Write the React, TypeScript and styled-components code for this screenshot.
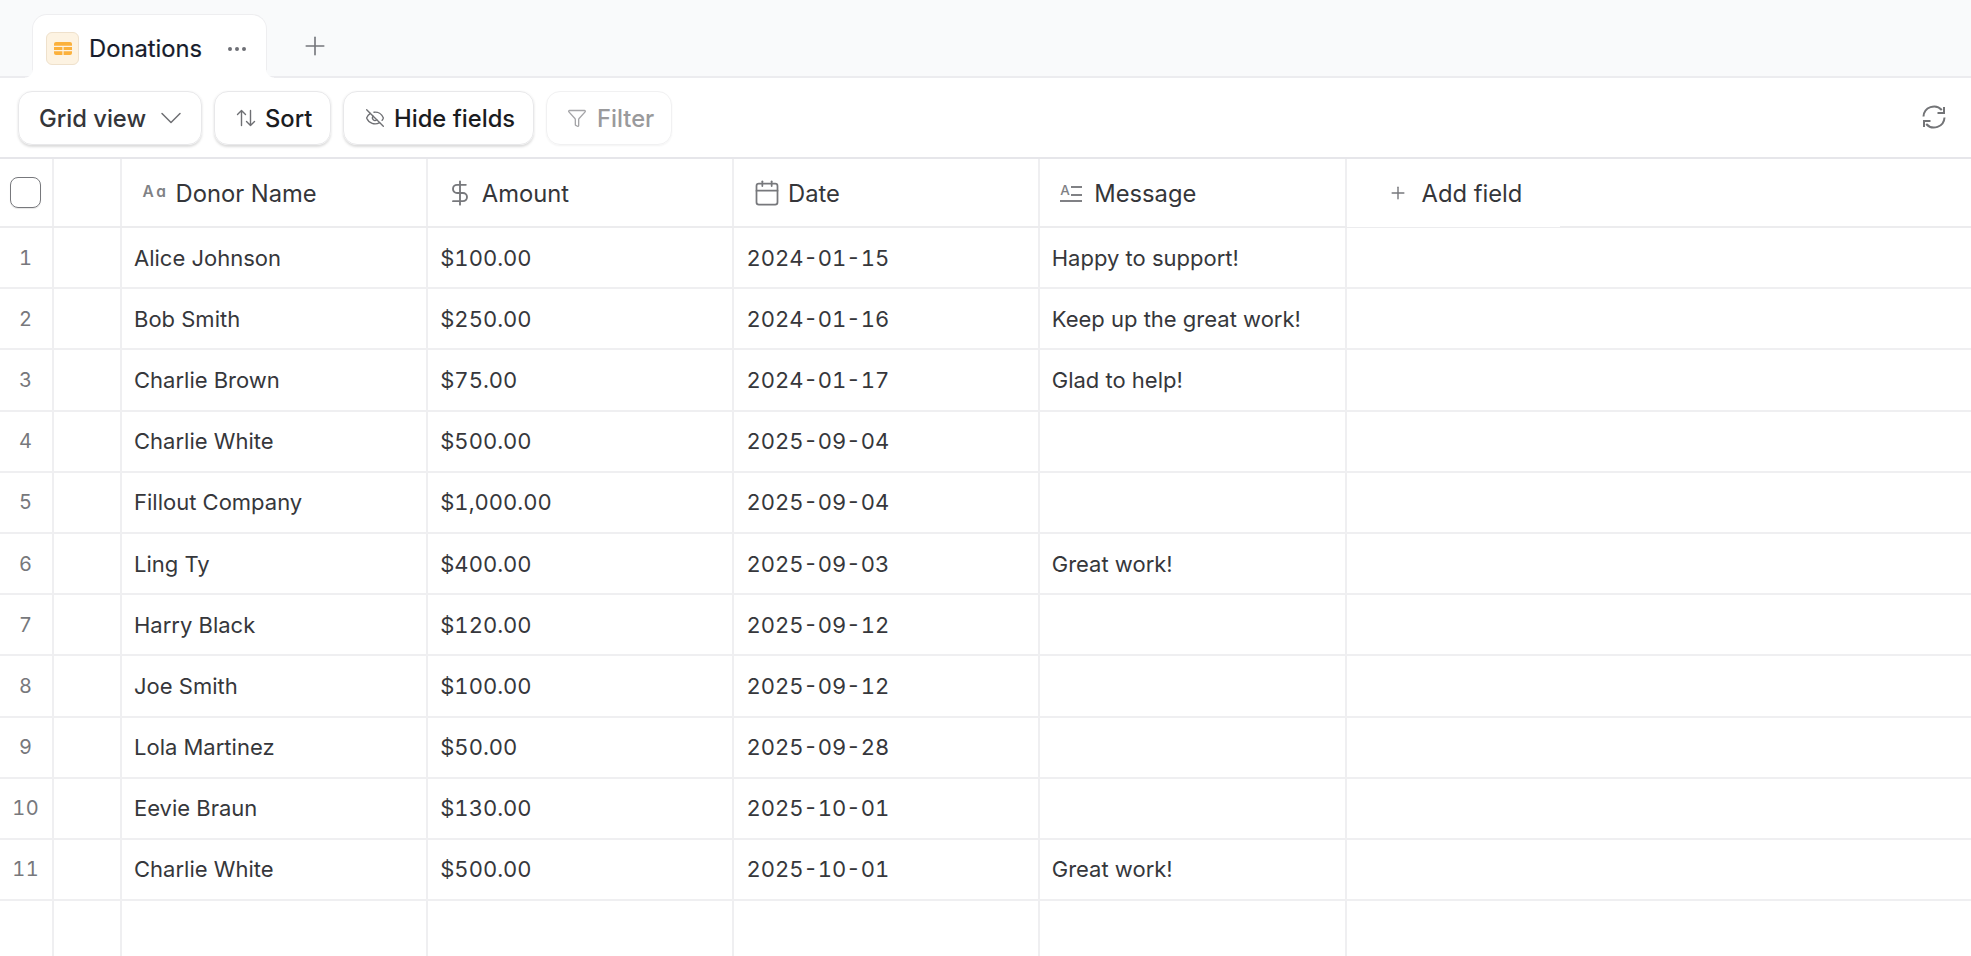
import React from "react";
import styled, { createGlobalStyle } from "styled-components";
import { ChevronDown, DollarSign, Ellipsis, EyeOff, Funnel, Plus, Calendar } from "lucide-react";

const Global = createGlobalStyle`
  html, body { margin: 0; padding: 0; height: 100%; background: #fff; overflow: hidden; }
  #root { height: 100%; }
  * { box-sizing: border-box; }
`;

const Page = styled.div`
  height: 956px;
  display: flex;
  flex-direction: column;
  font-family: Inter, "Liberation Sans", sans-serif;
  color: #2e2f33;
  background: #fff;
`;

const TabBar = styled.div`
  height: 78px;
  flex: none;
  padding: 14px 0 0 32px;
  display: flex;
  align-items: stretch;
  background: #f9fafb;
  border-bottom: 2px solid #ececef;
`;

const Tab = styled.div`
  position: relative;
  width: 235px;
  height: 64px;
  padding: 17px 0 0 13px;
  display: flex;
  align-items: flex-start;
  background: #fff;
  border: 1.5px solid #eeeef0;
  border-bottom: none;
  border-radius: 15px 15px 0 0;
  &::before, &::after {
    content: "";
    position: absolute;
    bottom: 0;
    width: 8px;
    height: 8px;
  }
  &::before { left: -8px; background: radial-gradient(circle at 0 0, transparent 7px, #fff 8px); }
  &::after { right: -8px; background: radial-gradient(circle at 100% 0, transparent 7px, #fff 8px); }
`;

const TabIcon = styled.div`
  width: 33px;
  height: 33px;
  flex: none;
  display: flex;
  align-items: center;
  justify-content: center;
  border-radius: 6px;
  background: #fdf3e2;
  border: 1.5px solid #efe1cc;
`;

const TabLabel = styled.span`
  margin-left: 10px;
  font-size: 23.75px;
  line-height: 33px;
  font-weight: 400;
  -webkit-text-stroke: 0.2px #171c2c;
  color: #171c2c;
  width: 125px;
  white-space: nowrap;
`;

const TabMenu = styled.span`
  margin-left: 11px;
  height: 33px;
  display: flex;
  align-items: center;
  color: #6d6f75;
`;

const AddTab = styled.div`
  margin-left: 33px;
  height: 64px;
  width: 30px;
  display: flex;
  align-items: center;
  color: #74767b;
`;

const Toolbar = styled.div`
  height: 81px;
  flex: none;
  padding: 13px 25px 0 18px;
  display: flex;
  align-items: flex-start;
  gap: 12px;
  border-bottom: 2px solid #e6e6ea;
`;

const ToolButton = styled.div<{ $w: number; $faded?: boolean; $pl: number; $gap: number }>`
  width: ${(p) => p.$w}px;
  height: 54px;
  flex: none;
  padding-left: ${(p) => p.$pl}px;
  display: flex;
  align-items: center;
  gap: ${(p) => p.$gap}px;
  border: 1.5px solid ${(p) => (p.$faded ? "#f1f1f2" : "#e8e8ea")};
  border-radius: 14px;
  box-shadow: ${(p) => (p.$faded ? "0 1px 2px rgba(0,0,0,.05)" : "0 1.5px 2.5px rgba(0,0,0,.14)")};
  font-size: 23.75px;
  font-weight: 500;
  white-space: nowrap;
  color: ${(p) => (p.$faded ? "#9a9a9c" : "#1b1c1f")};
  svg { flex: none; color: ${(p) => (p.$faded ? "#a5a5a8" : "#6e6f73")}; }
`;

const GridLabel = styled.span`
  color: #35363a;
`;

const Spacer = styled.div`
  flex: 1;
`;

const Refresh = styled.div`
  margin-top: 14px;
  color: #737477;
  display: flex;
`;

const Grid = styled.div`
  flex: 1;
  display: flex;
  flex-direction: column;
  min-height: 0;
`;

const Columns = "53.5px 68px repeat(4, 306.25px) 1fr";

const HeaderRow = styled.div`
  height: 69px;
  flex: none;
  display: grid;
  grid-template-columns: ${Columns};
  border-bottom: 2px solid #ececee;
`;

const Row = styled.div`
  height: 61.2px;
  flex: none;
  display: grid;
  grid-template-columns: ${Columns};
  border-bottom: 2px solid #efeff1;
`;

const Filler = styled.div`
  flex: 1;
  display: grid;
  grid-template-columns: ${Columns};
`;

const Cell = styled.div`
  border-right: 2px solid #efeff1;
  display: flex;
  align-items: center;
  min-width: 0;
`;

const LastCell = styled.div``;

const CheckCell = styled(Cell)`
  padding-left: 10px;
`;

const Checkbox = styled.div`
  width: 31px;
  height: 31px;
  border: 1.5px solid #77787c;
  border-radius: 8px;
  box-shadow: 0 1px 1px rgba(0,0,0,.1);
`;

const HeadCell = styled(Cell)<{ $pl: number; $gap: number }>`
  padding-left: ${(p) => p.$pl}px;
  padding-top: 1px;
  gap: ${(p) => p.$gap}px;
  font-size: 23.75px;
  color: #35363a;
  white-space: nowrap;
  svg { flex: none; color: #77787c; }
`;

const AddField = styled.div`
  width: 213px;
  margin-bottom: -1px;
  padding: 1px 0 0 41px;
  display: flex;
  align-items: center;
  gap: 14px;
  font-size: 23.75px;
  color: #35363a;
  border-bottom: 1px solid #fff;
  svg { color: #77787c; flex: none; }
`;

const AaGlyph = styled.span`
  width: 26px;
  font-size: 15.5px;
  font-weight: 600;
  letter-spacing: 2.5px;
  color: #808185;
  position: relative;
  top: -2px;
`;

const LineGlyph = styled.span`
  position: relative;
  width: 22px;
  height: 18px;
  display: block;
  font-size: 13.5px;
  line-height: 13px;
  font-weight: 500;
  color: #808185;
  &::before {
    content: "";
    position: absolute;
    left: 11px;
    top: 2px;
    width: 11px;
    height: 6px;
    border-top: 2px solid #808185;
    border-bottom: 2px solid #808185;
  }
  &::after {
    content: "";
    position: absolute;
    left: 0;
    right: 0;
    bottom: 0;
    border-top: 2.5px solid #808185;
  }
`;

const IndexCell = styled(Cell)`
  justify-content: center;
  font-size: 20px;
  color: #77787c;
  font-variant-numeric: tabular-nums;
  letter-spacing: 0.6px;
`;

const TextCell = styled(Cell)`
  padding-left: 12.5px;
  font-size: 22px;
  color: #36373b;
  white-space: nowrap;
`;

const MessageCell = styled(TextCell)`
  padding-left: 11.5px;
`;

const NumberCell = styled(TextCell)`
  font-variant-numeric: tabular-nums;
`;

const rows = [
  ["Alice Johnson", "$100.00", "2024-01-15", "Happy to support!"],
  ["Bob Smith", "$250.00", "2024-01-16", "Keep up the great work!"],
  ["Charlie Brown", "$75.00", "2024-01-17", "Glad to help!"],
  ["Charlie White", "$500.00", "2025-09-04", ""],
  ["Fillout Company", "$1,000.00", "2025-09-04", ""],
  ["Ling Ty", "$400.00", "2025-09-03", "Great work!"],
  ["Harry Black", "$120.00", "2025-09-12", ""],
  ["Joe Smith", "$100.00", "2025-09-12", ""],
  ["Lola Martinez", "$50.00", "2025-09-28", ""],
  ["Eevie Braun", "$130.00", "2025-10-01", ""],
  ["Charlie White", "$500.00", "2025-10-01", "Great work!"],
];

const TableIcon = () => (
  <svg width="18" height="13" viewBox="0 0 18 13">
    <rect x="0" y="0" width="18" height="13" rx="2" fill="#fbb13c" />
    <path d="M0 4.3h18M0 8.7h18M9 4.3v8.7" stroke="#fdf3e2" strokeWidth="1.2" />
  </svg>
);

const SortIcon = () => (
  <svg width="20" height="18" viewBox="0 0 20 18" fill="none" stroke="currentColor" strokeWidth="1.4" strokeLinecap="round" strokeLinejoin="round">
    <path d="M5.5 16.5V1.5M1.5 5.5l4-4 4 4" />
    <path d="M14.5 1.5v15M10.5 12.5l4 4 4-4" />
  </svg>
);

const RefreshIcon = () => (
  <svg width="24" height="24" viewBox="0 0 24 24" fill="none" stroke="currentColor" strokeWidth="2">
    <path d="M1.5 11.5A10.5 10.5 0 0 1 19.8 5" />
    <path d="M22.5 12.5A10.5 10.5 0 0 1 4.2 19" />
    <path d="M22 2v6h-6.5" strokeLinejoin="miter" />
    <path d="M2 22v-6h6.5" strokeLinejoin="miter" />
  </svg>
);

export default function App() {
  return (
    <Page>
      <Global />
      <TabBar>
        <Tab>
          <TabIcon><TableIcon /></TabIcon>
          <TabLabel>Donations</TabLabel>
          <TabMenu><Ellipsis size={24} strokeWidth={2} /></TabMenu>
        </Tab>
        <AddTab><Plus size={30} strokeWidth={1.3} /></AddTab>
      </TabBar>
      <Toolbar>
        <ToolButton $w={184} $pl={20} $gap={7}>
          <GridLabel>Grid view</GridLabel>
          <ChevronDown size={36} strokeWidth={1} />
        </ToolButton>
        <ToolButton $w={117} $pl={21} $gap={9}>
          <SortIcon />
          <span>Sort</span>
        </ToolButton>
        <ToolButton $w={191} $pl={21} $gap={9}>
          <EyeOff size={20} strokeWidth={1.6} />
          <span>Hide fields</span>
        </ToolButton>
        <ToolButton $w={126} $pl={20} $gap={10} $faded>
          <Funnel size={20} strokeWidth={1.6} />
          <span>Filter</span>
        </ToolButton>
        <Spacer />
        <Refresh><RefreshIcon /></Refresh>
      </Toolbar>
      <Grid>
        <HeaderRow>
          <CheckCell><Checkbox /></CheckCell>
          <Cell />
          <HeadCell $pl={21} $gap={7}><AaGlyph>Aɑ</AaGlyph>Donor Name</HeadCell>
          <HeadCell $pl={18} $gap={8}><DollarSign size={28} strokeWidth={1.6} />Amount</HeadCell>
          <HeadCell $pl={19} $gap={7}><Calendar size={28} strokeWidth={1.5} />Date</HeadCell>
          <HeadCell $pl={20} $gap={12}><LineGlyph>A</LineGlyph>Message</HeadCell>
          <AddField><Plus size={20} strokeWidth={1.7} />Add field</AddField>
        </HeaderRow>
        {rows.map((r, i) => (
          <Row key={i}>
            <IndexCell>{i + 1}</IndexCell>
            <Cell />
            <TextCell>{r[0]}</TextCell>
            <NumberCell>{r[1]}</NumberCell>
            <NumberCell>{r[2]}</NumberCell>
            <MessageCell>{r[3]}</MessageCell>
            <LastCell />
          </Row>
        ))}
        <Filler>
          <Cell /><Cell /><Cell /><Cell /><Cell /><Cell /><LastCell />
        </Filler>
      </Grid>
    </Page>
  );
}
